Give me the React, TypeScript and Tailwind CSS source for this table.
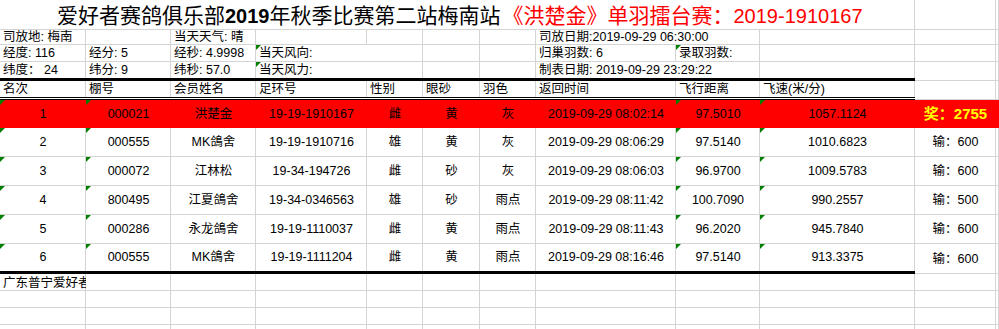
import type { ReactNode } from "react";

const COLS = "grid grid-cols-[86px_85px_85px_111px_56px_57px_56px_140px_84px_155px_81px_1fr]";
const G = "shadow-[inset_-1px_-1px_0_#d4d4d4]";
const GR = "shadow-[inset_-1px_0_0_#d4d4d4]";
const GB = "shadow-[inset_0_-1px_0_#d4d4d4]";

type CellProps = {
  children?: ReactNode;
  className?: string;
  tri?: boolean;
};

function Cell({ children, className = "", tri = false }: CellProps) {
  return (
    <div className={`${tri ? "relative" : ""} flex whitespace-nowrap ${className}`}>
      {tri && (
        <span className="absolute left-0 top-0 h-0 w-0 border-r-[5px] border-t-[5px] border-r-transparent border-t-[#008000]" />
      )}
      {children}
    </div>
  );
}

const info = "items-center pl-[3px] leading-none";
const thick = `border-b-[3px] border-black ${GR}`;

const rows = [
  ["1", "000021", "洪楚金", "19-19-1910167", "雌", "黄", "灰", "2019-09-29 08:02:14", "97.5010", "1057.1124", "奖：2755"],
  ["2", "000555", "MK鴿舍", "19-19-1910716", "雄", "黄", "灰", "2019-09-29 08:06:29", "97.5140", "1010.6823", "输：600"],
  ["3", "000072", "江林松", "19-34-194726", "雌", "砂", "灰", "2019-09-29 08:06:03", "96.9700", "1009.5783", "输：600"],
  ["4", "800495", "江夏鴿舍", "19-34-0346563", "雄", "砂", "雨点", "2019-09-29 08:11:42", "100.7090", "990.2557", "输：500"],
  ["5", "000286", "永龙鴿舍", "19-19-1110037", "雌", "黄", "雨点", "2019-09-29 08:11:43", "96.2020", "945.7840", "输：600"],
  ["6", "000555", "MK鴿舍", "19-19-1111204", "雌", "黄", "雨点", "2019-09-29 08:16:46", "97.5140", "913.3375", "输：600"],
];

const triCols = [0, 1, 8, 9];
const headers = ["名次", "棚号", "会员姓名", "足环号", "性别", "眼砂", "羽色", "返回时间", "飞行距离", "飞速(米/分)"];

export default function App() {
  return (
    <div className="h-[329px] w-[999px] overflow-hidden bg-white font-['Liberation_Sans','Noto_Sans_CJK_SC',sans-serif] text-[12.5px] text-black">
      {/* title */}
      <div className={`${COLS} h-[30px]`}>
        <Cell className={`col-span-10 items-center pl-[57px] pt-[1px] text-[21px] leading-none ${G}`}>
          <span>爱好者赛鸽俱乐部</span>
          <span className="text-[20px] font-bold">2019</span>
          <span>年秋季比赛第二站梅南站</span>
          <span className="ml-[2px] text-[#ff0000]">《洪楚金》单羽擂台赛：</span>
          <span className="text-[20px] text-[#ff0000]">2019-1910167</span>
        </Cell>
        <Cell className={G} />
        <Cell className={G} />
      </div>

      {/* info rows */}
      <div className={`${COLS} h-[15px]`}>
        <Cell className={`${info} ${G}`}>司放地: 梅南</Cell>
        <Cell className={G} />
        <Cell className={`${info} ${G}`}>当天天气: 晴</Cell>
        <Cell className={G} />
        <Cell className={G} />
        <Cell className={G} />
        <Cell className={G} />
        <Cell className={`${info} ${GB}`}>司放日期:2019-09-29 06:30:00</Cell>
        <Cell className={G} />
        <Cell className={G} />
        <Cell className={G} />
        <Cell className={G} />
      </div>
      <div className={`${COLS} h-[17px]`}>
        <Cell className={`${info} ${G}`}>经度: 116</Cell>
        <Cell className={`${info} ${G}`}>经分: 5</Cell>
        <Cell className={`${info} ${G}`}>经秒: 4.9998</Cell>
        <Cell tri className={`${info} ${GB}`}>当天风向:</Cell>
        <Cell className={G} />
        <Cell className={G} />
        <Cell className={G} />
        <Cell className={`${info} ${G}`}>归巢羽数: 6</Cell>
        <Cell tri className={`${info} ${G}`}>录取羽数:</Cell>
        <Cell className={G} />
        <Cell className={G} />
        <Cell className={G} />
      </div>
      <div className={`${COLS} h-[19px]`}>
        <Cell className={`${info} ${thick}`}>纬度： 24</Cell>
        <Cell className={`${info} ${thick}`}>纬分: 9</Cell>
        <Cell className={`${info} ${thick}`}>纬秒: 57.0</Cell>
        <Cell tri className={`${info} border-b-[3px] border-black`}>当天风力:</Cell>
        <Cell className={thick} />
        <Cell className={thick} />
        <Cell className={thick} />
        <Cell className={`${info} border-b-[3px] border-black`}>制表日期: 2019-09-29 23:29:22</Cell>
        <Cell className={thick} />
        <Cell className={thick} />
        <Cell className={G} />
        <Cell className={G} />
      </div>

      {/* header */}
      <div className={`${COLS} h-[19px]`}>
        {headers.map((h) => (
          <Cell key={h} className={`items-end border-b-[3px] border-double border-black pl-[3px] leading-[15px] ${GR}`}>
            {h}
          </Cell>
        ))}
        <Cell className={G} />
        <Cell className={G} />
      </div>

      {/* results */}
      {rows.map((r, i) => {
        const first = i === 0;
        const last = i === rows.length - 1;
        const h = first ? "h-[28px]" : last ? "h-[30px]" : "h-[29px]";
        const base = "items-center justify-center";
        const line = first ? "bg-[#ff0000]" : last ? thick : G;
        return (
          <div key={i} className={`${COLS} ${h}`}>
            {r.slice(0, 10).map((v, j) => (
              <Cell key={j} tri={triCols.includes(j)} className={`${base} ${line}`}>
                {v}
              </Cell>
            ))}
            <Cell
              className={`${base} ${first ? "bg-[#ff0000] text-[15px] font-bold text-[#ffff00]" : G}`}
            >
              {r[10]}
            </Cell>
            <Cell className={first ? "bg-[#ff0000]" : G} />
          </div>
        );
      })}

      {/* trailing empty rows */}
      <div className={`${COLS} h-[17px]`}>
        <Cell className={`items-end overflow-hidden pl-[3px] leading-[15px] ${G}`}>广东普宁爱好者赛鸽俱乐部</Cell>
        {Array.from({ length: 11 }).map((_, j) => (
          <Cell key={j} className={G} />
        ))}
      </div>
      {[0, 1, 2].map((k) => (
        <div key={k} className={`${COLS} h-[17px]`}>
          {Array.from({ length: 12 }).map((_, j) => (
            <Cell key={j} className={G} />
          ))}
        </div>
      ))}
    </div>
  );
}
